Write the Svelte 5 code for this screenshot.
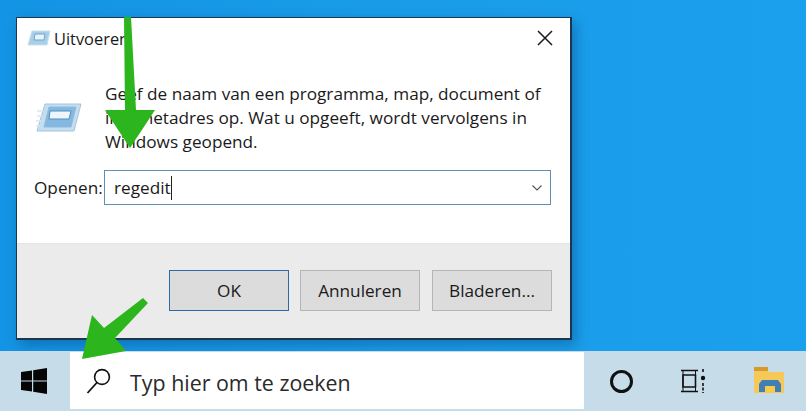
<script>
  const lines = [
    'Geef de naam van een programma, map, document of',
    'internetadres op. Wat u opgeeft, wordt vervolgens in',
    'Windows geopend.'
  ];
</script>

<div class="desktop">
  <div class="stage">
    <div class="window">
      <div class="body">
        <div class="titlebar">
          <svg class="title-icon" width="24" height="16" viewBox="0 0 24 16">
            <path d="M5 1h18l-3 14H1z" fill="#a9cfe8" stroke="#c9dfee" />
            <path d="M8 4h10l-1 6H7z" fill="#e8f3fa" stroke="#6fa4c9" />
          </svg>
          <span class="title">Uitvoeren</span>
          <svg class="close" width="16" height="16" viewBox="0 0 16 16">
            <path d="M1 1l14 14M15 1L1 15" stroke="#1a1a1a" stroke-width="1.5" fill="none" />
          </svg>
        </div>
        <div class="intro">
          <svg class="run-icon" width="46" height="29" viewBox="0 0 46 29">
            <path d="M9 1h36l-7 27H1z" fill="#c4deef" stroke="#a4c6dd" />
            <path d="M13 4h27l-5 20H8z" fill="#84b8e0" stroke="#8fbcdc" />
            <path d="M14 8h21l-2 8H13z" fill="#eef6fb" stroke="#4f8fc0" />
            <path d="M1 8h6M1 13h5M0 18h5M0 23h4" stroke="#d8e8f3" stroke-width="1.5" />
          </svg>
          <p class="message">
            {#each lines as line}<span>{line}</span>{/each}
          </p>
        </div>
        <div class="open-row">
          <label for="run">Openen:</label>
          <div class="combo">
            <span class="value">regedit</span><span class="caret"></span>
            <svg class="chevron" width="10" height="6" viewBox="0 0 10 6">
              <path d="M0.5 0.5L5 5l4.5-4.5" stroke="#555" stroke-width="1.1" fill="none" />
            </svg>
          </div>
        </div>
      </div>
      <div class="footer">
        <button class="btn primary">OK</button>
        <button class="btn">Annuleren</button>
        <button class="btn">Bladeren...</button>
      </div>
    </div>
  </div>

  <div class="taskbar">
    <div class="start">
      <svg width="26" height="26" viewBox="0 0 26 26">
        <path d="M0 4l11-1.6V12.4H0zM12.2 2.2L26 0v12.4H12.2zM0 13.6h11v10L0 22zM12.2 13.6H26V26l-13.8-2.2z" fill="#050505" />
      </svg>
    </div>
    <div class="search">
      <svg width="26" height="28" viewBox="0 0 26 28">
        <circle cx="16" cy="10" r="7.4" fill="none" stroke="#111" stroke-width="1.6" />
        <path d="M11 15.5L1.5 26" stroke="#111" stroke-width="1.8" />
      </svg>
      <span>Typ hier om te zoeken</span>
    </div>
    <div class="tray">
      <div class="tray-item">
        <span class="cortana"></span>
      </div>
      <div class="tray-item">
        <svg width="26" height="24" viewBox="0 0 26 24">
          <path d="M1 1.5h17M1 22.5h17M3 6h12.5v12H3z" fill="none" stroke="#111" stroke-width="1.6" />
          <path d="M3 1.5v21M15.5 1.5v21" stroke="#111" stroke-width="1" />
          <path d="M23 0v4M23 14v10" stroke="#111" stroke-width="1.6" stroke-dasharray="3 1.5" />
          <circle cx="23" cy="9" r="2.2" fill="#111" />
        </svg>
      </div>
      <div class="tray-item folder">
        <svg width="32" height="28" viewBox="0 0 32 28">
          <path d="M1 2h13l2 3h15v21H1z" fill="#f5c85a" />
          <path d="M1 0h14v4H1z" fill="#d9982a" />
          <path d="M6 25v-8l3-4h16l3 4v8h-6v-6H12v6z" fill="#3f7fb5" />
          <path d="M12 19h10v7H12z" fill="#f7c948" />
        </svg>
      </div>
    </div>
  </div>

  <svg class="arrows" width="806" height="411" viewBox="0 0 806 411">
    <path d="M124 17h7l5 93h19l-25 38-25-38h20z" fill="#2cb51d" />
    <path d="M143 298l5 5-33 35 11 13-44 8 10-44 12 13z" fill="#2cb51d" />
  </svg>
</div>

<style>
  :global(body) {
    margin: 0;
  }
  .desktop {
    position: relative;
    width: 806px;
    height: 411px;
    overflow: hidden;
    display: flex;
    flex-direction: column;
    background: linear-gradient(90deg, #1494e4, #1a9cea 50%, #1ba0ee);
    font-family: "Open Sans", "Noto Sans", sans-serif;
    color: #1a1a1a;
  }
  .stage {
    flex: 1;
    padding: 17px 0 0 16px;
    min-height: 0;
  }
  .window {
    width: 553px;
    height: 320px;
    border: 1px solid #17384f;
    border-right-width: 2px;
    border-bottom-width: 2px;
    background: #fff;
    display: flex;
    flex-direction: column;
    box-shadow: 4px 5px 12px rgba(10, 60, 110, 0.4);
  }
  .body {
    flex: 1;
    display: flex;
    flex-direction: column;
    min-height: 0;
  }
  .titlebar {
    display: flex;
    align-items: center;
    height: 40px;
    padding: 0 17px 0 10px;
  }
  .title-icon {
    margin-right: 3px;
  }
  .title {
    font-size: 16.4px;
  }
  .close {
    margin-left: auto;
  }
  .intro {
    display: flex;
    align-items: flex-start;
    padding: 24px 0 0 19px;
    height: 71px;
  }
  .run-icon {
    margin: 21px 0 0 0;
  }
  .message {
    margin: 0 0 0 23px;
    font-size: 17.2px;
    line-height: 24px;
    white-space: nowrap;
  }
  .message span {
    display: block;
  }
  .open-row {
    display: flex;
    align-items: center;
    padding: 17px 0 0 17px;
  }
  label {
    font-size: 17.2px;
    width: 70px;
  }
  .combo {
    display: flex;
    align-items: center;
    box-sizing: border-box;
    width: 447px;
    height: 35px;
    border: 1px solid #5f8fb0;
    padding: 0 7px 0 9px;
    font-size: 17.2px;
  }
  .caret {
    width: 1px;
    height: 24px;
    background: #222;
  }
  .chevron {
    margin-left: auto;
    margin-right: 1px;
  }
  .footer {
    height: 95px;
    flex: none;
    background: #ebebeb;
    border-top: 1px solid #e4e4e4;
    display: flex;
    align-items: flex-start;
    gap: 11px;
    box-sizing: border-box;
    padding: 26px 0 0 152px;
  }
  .btn {
    width: 120px;
    height: 41px;
    background: #dcdcdc;
    border: 1px solid #b5b5b5;
    font: inherit;
    font-size: 17.2px;
    color: #1a1a1a;
    padding: 0;
  }
  .btn:last-child {
    margin-left: 1px;
  }
  .btn.primary {
    border: 1.5px solid #2f6aa8;
  }
  .taskbar {
    height: 60px;
    flex: none;
    background: #c6dde9;
    display: flex;
  }
  .start {
    width: 67px;
    margin-right: 3px;
    flex: none;
    display: flex;
    align-items: center;
    justify-content: center;
  }
  .search {
    flex: none;
    width: 514px;
    margin-top: 1px;
    margin-bottom: 2px;
    background: #fff;
    display: flex;
    align-items: center;
    padding-left: 16px;
    box-sizing: border-box;
    gap: 18px;
    font-size: 21.4px;
    color: #2a2a2a;
  }
  .search span {
    margin-top: 3px;
  }
  .tray {
    flex: 1;
    display: flex;
    align-items: center;
    padding-left: 1px;
  }
  .tray-item {
    width: 72px;
    flex: none;
    display: flex;
    justify-content: center;
  }
  .folder {
    margin-left: 4px;
  }
  .cortana {
    width: 23px;
    height: 23px;
    box-sizing: border-box;
    border-radius: 50%;
    border: 3.5px solid #111;
    display: block;
  }
  .arrows {
    position: absolute;
    left: 0;
    top: 0;
    pointer-events: none;
  }
</style>
